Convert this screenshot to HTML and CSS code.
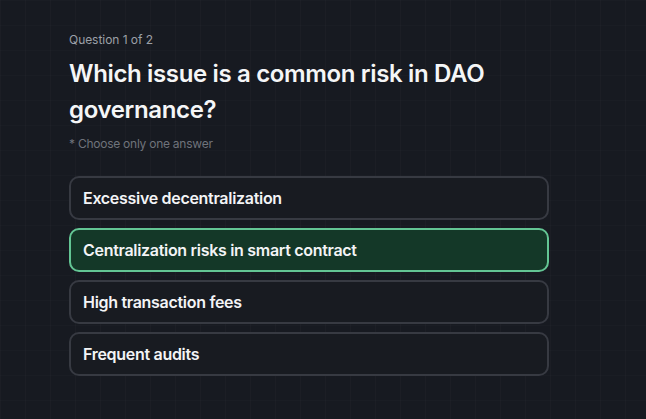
FILE: index.html
```html
<!DOCTYPE html>
<html>
<head>
<meta charset="utf-8">
<link rel="stylesheet" href="styles.css">
</head>
<body>
<main class="quiz">
  <div class="counter">Question 1 of 2</div>
  <h1 class="question">Which issue is a common risk in DAO governance?</h1>
  <div class="hint">* Choose only one answer</div>
  <div class="options">
    <button class="option">Excessive decentralization</button>
    <button class="option selected">Centralization risks in smart contract</button>
    <button class="option">High transaction fees</button>
    <button class="option">Frequent audits</button>
  </div>
</main>
</body>
</html>
```

FILE: styles.css
```css
* { box-sizing: border-box; }
html, body { margin: 0; height: 100%; }
body {
  background-color: #171a21;
  background-image:
    linear-gradient(to right, rgba(255,255,255,0.018) 1px, transparent 1px),
    linear-gradient(to bottom, rgba(255,255,255,0.012) 1px, transparent 1px);
  background-size: 25px 25px, 25px 25px;
  font-family: "Inter", "Liberation Sans", sans-serif;
  color: #f3f4f6;
}
.quiz {
  width: 480px;
  margin-left: 69px;
  padding-top: 32px;
  display: flex;
  flex-direction: column;
}
.counter {
  font-size: 12px;
  line-height: 16px;
  color: #9ca0a8;
  letter-spacing: -0.05px;
}
.question {
  margin: 8px 0 0;
  font-size: 24px;
  line-height: 36px;
  font-weight: 600;
  color: #f5f6f7;
  letter-spacing: -0.35px;
}
.hint {
  margin-top: 8px;
  font-size: 12px;
  line-height: 16px;
  color: #6f737b;
  letter-spacing: -0.25px;
}
.options {
  margin-top: 24px;
  display: flex;
  flex-direction: column;
  gap: 8px;
}
.option {
  height: 44px;
  padding: 0 12px;
  text-align: left;
  font-family: inherit;
  font-size: 16px;
  font-weight: 600;
  letter-spacing: -0.3px;
  color: #f3f4f6;
  background: #181b21;
  border: 2px solid #373a42;
  border-radius: 10px;
}
.option.selected {
  background: #143828;
  border-color: #63c594;
}
```
